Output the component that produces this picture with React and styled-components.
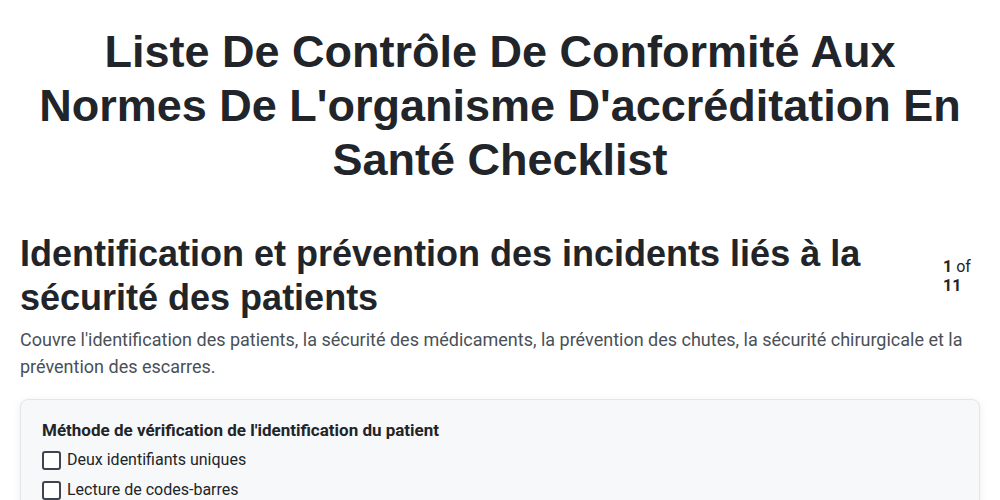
import React from 'react';
import styled, { createGlobalStyle } from 'styled-components';

const GlobalStyle = createGlobalStyle`
  body {
    margin: 0;
    background: #ffffff;
    font-family: Roboto, "Liberation Sans", sans-serif;
    color: #212529;
  }
`;

const options = ['Deux identifiants uniques', 'Lecture de codes-barres', 'Bracelet d\'identification'];

function App() {
  return (
    <Page>
      <GlobalStyle />
      <Title>Liste De Contrôle De Conformité Aux Normes De L'organisme D'accréditation En Santé Checklist</Title>
      <SectionHead>
        <SectionTitle>Identification et prévention des incidents liés à la sécurité des patients</SectionTitle>
        <Counter><b>1</b> of <b>11</b></Counter>
      </SectionHead>
      <Description>
        Couvre l'identification des patients, la sécurité des médicaments, la prévention des chutes, la sécurité chirurgicale et la prévention des escarres.
      </Description>
      <Card>
        <Question>Méthode de vérification de l'identification du patient</Question>
        {options.map((o) => (
          <Option key={o}>
            <Box type="checkbox" />
            <span>{o}</span>
          </Option>
        ))}
      </Card>
    </Page>
  );
}

export default App;

const Page = styled.div`
  max-width: 960px;
  margin: 0 auto;
  padding: 0 20px;
`;

const Title = styled.h1`
  font-family: "Liberation Sans", Arial, sans-serif;
  font-size: 45px;
  line-height: 54px;
  font-weight: 700;
  text-align: center;
  margin: 25px 0 45px;
  color: #212529;
`;

const SectionHead = styled.div`
  display: flex;
  align-items: center;
  justify-content: space-between;
  gap: 42px;
`;

const SectionTitle = styled.h2`
  font-family: "Liberation Sans", Arial, sans-serif;
  font-size: 36px;
  line-height: 44px;
  font-weight: 700;
  margin: 0;
  flex: 1;
`;

const Counter = styled.div`
  width: 37px;
  font-size: 16px;
  line-height: 19px;
  color: #212529;
  flex-shrink: 0;
`;

const Description = styled.p`
  font-size: 18px;
  line-height: 27px;
  color: #495057;
  margin: 6px 0 19px;
`;

const Card = styled.div`
  background: #f7f8fa;
  border: 1px solid #e4e6ea;
  border-radius: 8px;
  box-shadow: 0 2px 8px rgba(0, 0, 0, 0.08);
  padding: 20px 21px;
`;

const Question = styled.div`
  font-weight: 700;
  font-size: 17px;
  line-height: 20px;
  margin-bottom: 5px;
`;

const Option = styled.label`
  display: flex;
  align-items: center;
  gap: 6px;
  font-size: 16px;
  line-height: 20px;
  height: 30px;
`;

const Box = styled.input`
  appearance: none;
  width: 19px;
  height: 19px;
  margin: 0;
  border: 2px solid #3f4450;
  border-radius: 3px;
  background: #fff;
`;
